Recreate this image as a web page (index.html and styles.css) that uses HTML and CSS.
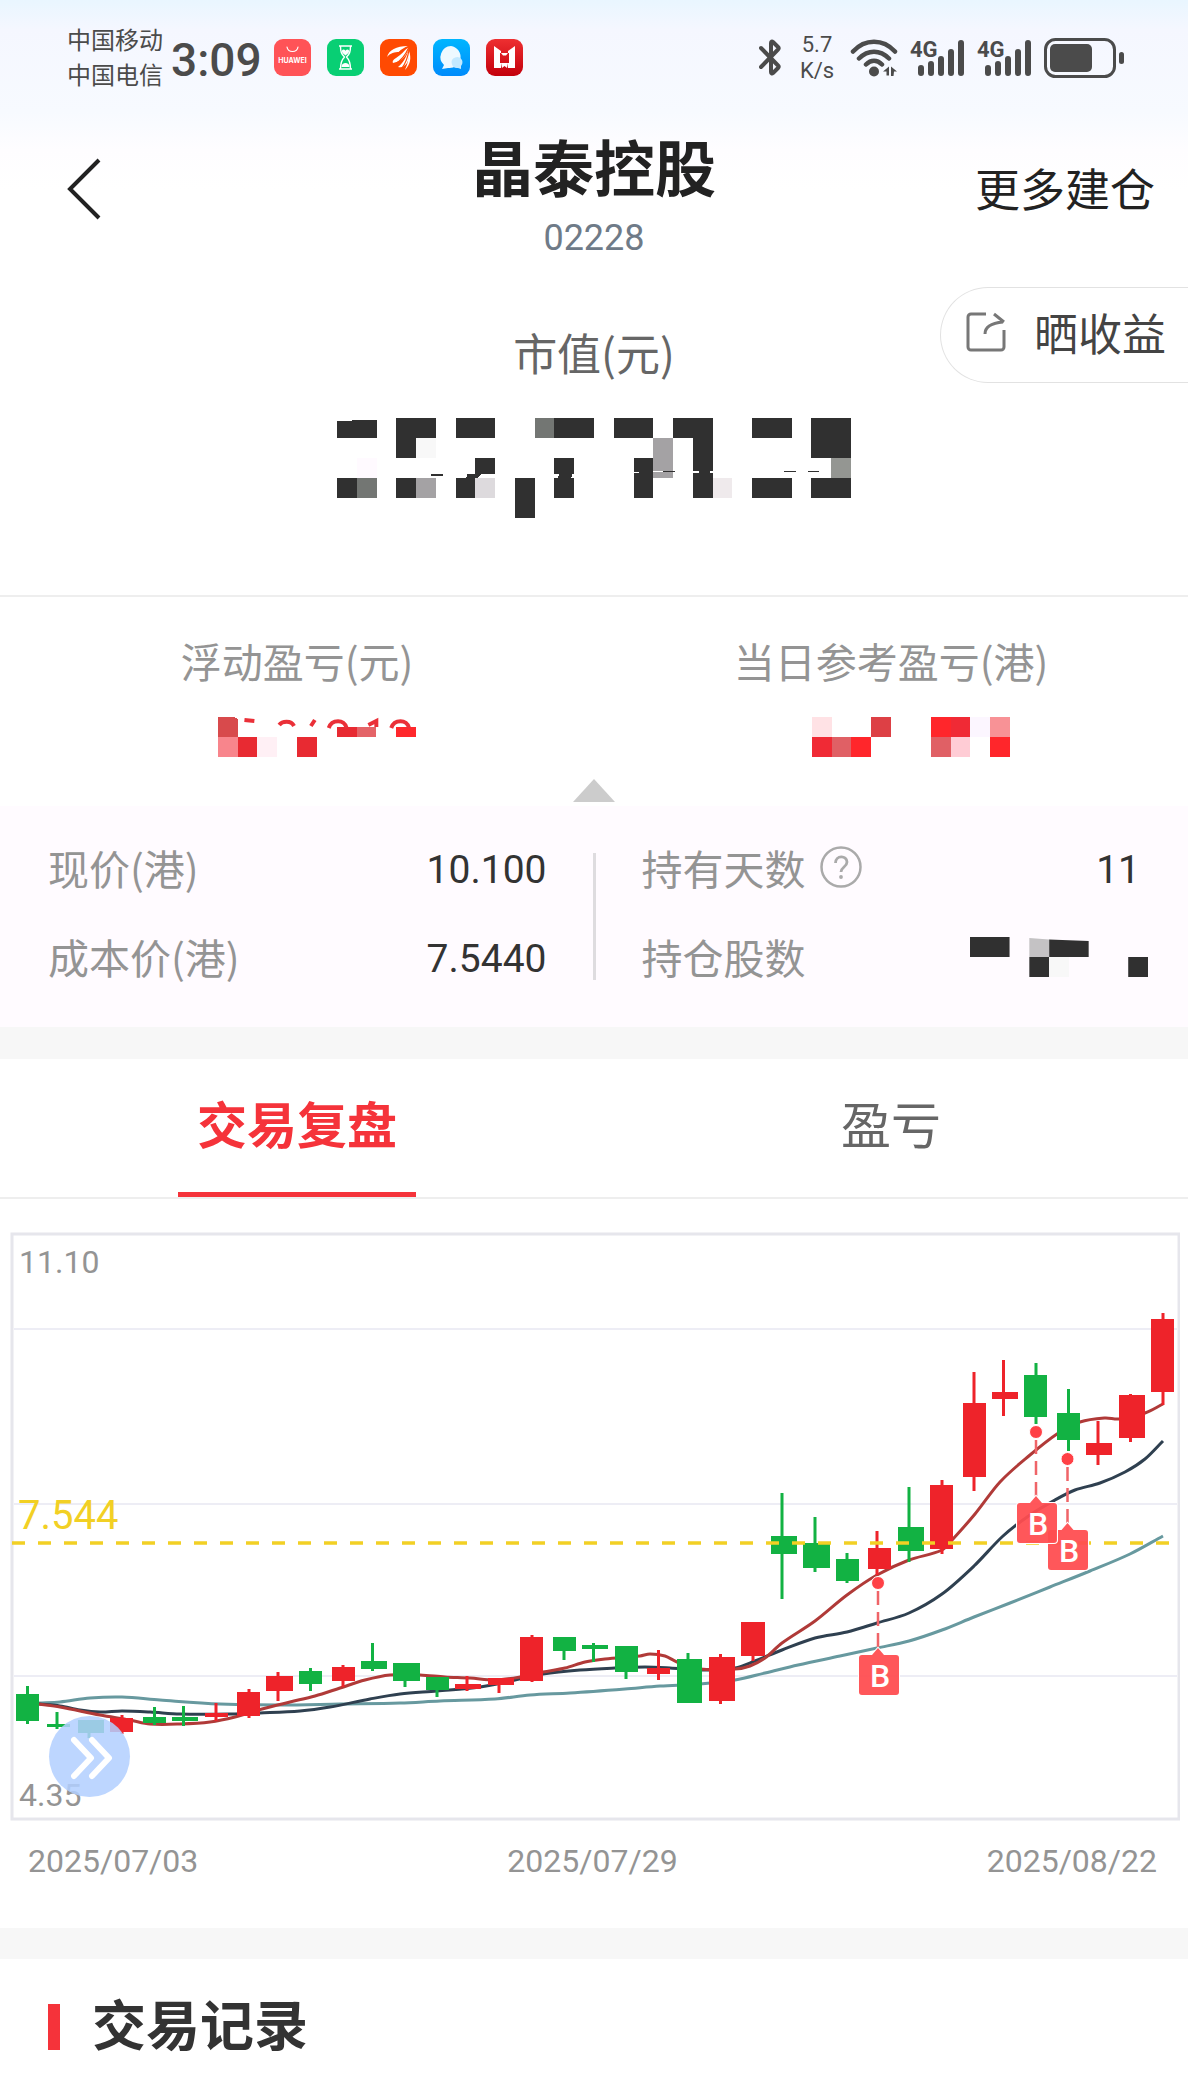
FILE: index.html
```html
<!DOCTYPE html>
<html lang="zh-CN">
<head>
<meta charset="utf-8">
<meta name="viewport" content="width=device-width, initial-scale=1">
<title>晶泰控股 02228</title>
<link rel="stylesheet" href="styles.css">
</head>
<body>
<div class="top">
  <div class="status">
    <div class="status-left">
      <div class="carriers"><span>中国移动</span><span>中国电信</span></div>
      <time class="clock">3:09</time>
      <div class="apps">
        <svg viewBox="0 0 37 37"><rect width="37" height="37" rx="9" fill="#ff5357"/><path d="M13 8c1 6 10 6 11 0" fill="none" stroke="#fff" stroke-width="1.2" stroke-linecap="round"/><text class="brand" x="18.5" y="24" text-anchor="middle">HUAWEI</text></svg>
        <svg viewBox="0 0 37 37"><rect width="37" height="37" rx="9" fill="#08cf74"/><g fill="none" stroke="#fff" stroke-width="1.4" stroke-linejoin="round"><path d="M12 7h13M12 30h13M13.500 7c0 6 1 8 4 11-3 3-4 6-4 12M23.500 7c0 6-1 8-4 11 3 3 4 6 4 12"/></g><path d="M15 11.500c1-1.500 2.500-1 3.500.3 1-1.300 2.500-1.800 3.500-.3.500 2-1.500 3.500-3.500 5-2-1.500-4-3-3.500-5zM14.500 28c0-3 2-4 4-4s4 1 4 4z" fill="#fff"/></svg>
        <svg viewBox="0 0 37 37"><rect width="37" height="37" rx="9" fill="#ff4a02"/><g fill="#fff"><path d="M7 18c2-7 9-11 21-11-4 2-7 3-9 6-4 0-9 1-12 5z"/><path d="M13 24c-1-2 1-4 3-5 5-3 8-7 12-11 1 3-1 6-3 9-3 4-7 6-12 7z"/><path d="M18 28c5-4 8-9 10.500-17 1.500 5 .5 9-1.500 13-2 3-5 5-9 4z"/><path d="M25 31c2-5 4-10 4-19 2.500 7 1.500 13-4 19z"/></g><path d="M9 20C14 15 21 13 28 8M15 25C22 21 26 15 28.500 9M22 29c4-5 6-12 7-18" fill="none" stroke="#ff4a02" stroke-width="1.200"/></svg>
        <svg viewBox="0 0 37 37"><defs><linearGradient id="chat" x2="0" y2="1"><stop stop-color="#00b6ff"/><stop offset="1" stop-color="#008bfb"/></linearGradient></defs><rect width="37" height="37" rx="9" fill="url(#chat)"/><path d="M18 7a11 11 0 1 1-3 22l-6 1 2-4A11 11 0 0 1 18 7z" fill="#eef9ff"/><path d="M29 21a6 6 0 0 1-1 6v3l-3-1a5.500 5.500 0 1 1 4-8z" fill="#c3e9ff"/></svg>
        <svg viewBox="0 0 37 37"><defs><linearGradient id="red" x2="0" y2="1"><stop stop-color="#ee2f31"/><stop offset="1" stop-color="#c3000c"/></linearGradient></defs><rect width="37" height="37" rx="9" fill="url(#red)"/><path d="M8 7l7 5v2h-1v10h1v5H8zM29 7l-7 5v2h1v10h-1v5h7zM15 14h7l-2 2.500h-3zM15 24h7l-1 5-2.500-2-2.500 2z" fill="#fff"/></svg>
      </div>
    </div>
    <div class="status-right">
      <svg class="bt" viewBox="0 0 22 37"><path d="M2 9l17 17.500c1 1 1 1.500 0 2.500l-5 5c-1 .8-2 .5-2-1V4c0-1.500 1-1.800 2-1l5 5c1 1 1 1.500 0 2.500L2 28" fill="none" stroke="#4b4b4b" stroke-width="4" stroke-linecap="round" stroke-linejoin="round"/></svg>
      <div class="speed"><span>5.7</span><span>K/s</span></div>
      <svg class="wifi" viewBox="0 0 48 38"><g fill="none" stroke="#4b4b4b" stroke-width="4.500" stroke-linecap="round"><path d="M3 12.500C15-.5 33-.5 45 12.500M9 19.500c9-9 21-9 30 0M16 25.500c5-5 11-5 16 0"/></g><circle cx="24" cy="32.500" r="5" fill="#4b4b4b"/><path d="M33 32.500l6-5v9h-2.500v-4zM41 27.500l6 5h-3l-.5 4.500H41z" fill="#4b4b4b"/></svg>
      <svg class="signal" viewBox="0 -4 55 46"><text x="0" y="18">4G</text><path d="M11 29v5M21 25v9M31 20v14M41 13v21M51 4v30" stroke="#4b4b4b" stroke-width="6" stroke-linecap="round"/></svg>
      <svg class="signal" viewBox="0 -4 55 46"><text x="0" y="18">4G</text><path d="M11 29v5M21 25v9M31 20v14M41 13v21M51 4v30" stroke="#4b4b4b" stroke-width="6" stroke-linecap="round"/></svg>
      <svg class="battery" viewBox="0 0 80 40"><rect x="1.500" y="1.500" width="69" height="37" rx="10" fill="none" stroke="#4b4b4b" stroke-width="3"/><rect x="6" y="6" width="42" height="28" rx="5" fill="#4b4b4b"/><rect x="75" y="14" width="5" height="12" rx="2.500" fill="#4b4b4b"/></svg>
    </div>
  </div>

  <header class="header">
    <button class="back" type="button" aria-label="返回"><svg viewBox="0 0 36 64"><path d="M33 3L4 32l29 29" fill="none" stroke="#222" stroke-width="4"/></svg></button>
    <div class="stock">
      <h1>晶泰控股</h1>
      <p>02228</p>
    </div>
    <a class="more" href="#more">更多建仓</a>
  </header>
</div>

<main>
  <section class="market">
    <div class="market-value">
      <p class="market-label">市值(元)</p>
      <svg class="mosaic-total" viewBox="0 0 26 5" preserveAspectRatio="none" role="img" aria-label="已隐藏" shape-rendering="crispEdges">
        <path fill="#303030" d="M0 .15L.6 .15 1 .08 2 .12V1H0zM3 0h2v1H4v1H3zM6 0h2v1H6zM11 0h2v1h-2zM14 0h2v1h-2zM17 0h2v4h-1V1h-1zM21 0h2v1h-2zM24 0h2v2h-2zM7 2h1v.8H7zM11 2h1v2h-1zM15 2h1v2h-1zM0 3h1v1H0zM3 3h1v1H3zM6 3h1v1H6zM6.600 2.800h.7l-.3.300h-.5zM9 3h1v2H9zM21 3h2v1h-2zM24 3h2v1h-2zM4.750 2.820h.6v.1h-.6zM16.500 2.650h.6v.07h-.6zM22.600 2.650h.6v.07h-.6zM23.800 2.650h.6v.07h-.6z"/>
        <path fill="#737673" d="M10 0h1v1h-1zM1 3h1v1H1z"/>
        <path fill="#a4a2a4" d="M16 1h1v1.650h-1zM16.500 2.720h.5V3h-1v-.28zM4 3h1v1H4z"/>
        <path fill="#949692" d="M25 2h1v1h-1z"/>
        <path fill="#f8f8f8" d="M4 1h1v1H4z"/>
        <path fill="#fffaff" d="M1 2h1v1H1z"/>
        <path fill="#dddadd" d="M7 3h1v1H7z"/>
        <path fill="#efeaec" d="M19 3h1v1h-1z"/>
        <path fill="#fff" d="M11 2.800h.25l-.1.200H11zM11.900 2.800h.1V3h-.15zM15 2.680h.3v.08H15zM18 2.650h.3v.08H18zM18.850 2.650H19v.08h-.15z"/>
      </svg>
    </div>
    <button class="share" type="button">
      <svg viewBox="0 0 40 40"><path d="M20 2H5a3 3 0 0 0-3 3v30a3 3 0 0 0 3 3h30a3 3 0 0 0 3-3V18M19 22c0-7 6-11 18-12M28 2l10 8" fill="none" stroke="#777" stroke-width="3"/></svg>
      <span>晒收益</span>
    </button>
  </section>

  <section class="profit">
    <div class="profit-item">
      <p>浮动盈亏(元)</p>
      <svg viewBox="0 0 240 40" preserveAspectRatio="none" role="img" aria-label="已隐藏">
        <g shape-rendering="crispEdges"><path fill="#d84a4c" d="M40 0h17l3 2v18H40z"/><path fill="#e82a32" d="M160 10h20v10h-20zM60 20h20v20H60zM120 20h20v20h-20z"/><path fill="#e46468" d="M180 10h20v10h-20z"/><path fill="#ff282c" d="M220 10h20v10h-20z"/><path fill="#f8858c" d="M40 20h20v20H40z"/><path fill="#fff0f5" d="M80 20h20v20H80z"/></g>
        <path fill="none" stroke="#ea3038" stroke-width="4" d="M67 3l10 1M102 8c3-4 12-5 15 1M138 3l-4 6M152 11c3-9 16-9 18 0M192 8l8-4v6M215 11c3-9 16-9 18 0"/>
      </svg>
    </div>
    <div class="profit-item">
      <p>当日参考盈亏(港)</p>
      <svg viewBox="0 0 12 2" preserveAspectRatio="none" role="img" aria-label="已隐藏" shape-rendering="crispEdges">
        <path fill="#ffe2e5" d="M2 0h1v1H2z"/><path fill="#dd4045" d="M5 0h1v1H5z"/><path fill="#ff262b" d="M8 0h1v1H8zM4 1h1v1H4zM11 1h1v1h-1z"/><path fill="#f02a35" d="M9 0h1v1H9zM2 1h1v1H2z"/><path fill="#fcf6ff" d="M10 0h1v1h-1z"/><path fill="#f89296" d="M11 0h1v1h-1z"/><path fill="#e06065" d="M3 1h1v1H3zM8 1h1v1H8z"/><path fill="#ffccd5" d="M9 1h1v1H9z"/>
      </svg>
    </div>
  </section>
  <div class="fold"><svg viewBox="0 0 42 23"><path d="M21 0l21 23H0z" fill="#ccc"/></svg></div>

  <section class="details">
    <dl>
      <div><dt>现价(港)</dt><dd>10.100</dd></div>
      <div><dt>成本价(港)</dt><dd>7.5440</dd></div>
    </dl>
    <i class="rule"></i>
    <dl>
      <div><dt>持有天数 <svg class="help" viewBox="0 0 42 42"><circle cx="21" cy="21" r="19.500" fill="none" stroke="#aaa" stroke-width="2.500"/><path d="M15.500 17c0-8 11.500-8 11.500-1 0 5-6 5-6 10" fill="none" stroke="#aaa" stroke-width="2.800"/><circle cx="21" cy="31" r="1.900" fill="#aaa"/></svg></dt><dd>11</dd></div>
      <div><dt>持仓股数</dt><dd class="hidden-value"><svg viewBox="0 0 9 2" preserveAspectRatio="none" role="img" aria-label="已隐藏"><path fill="#303030" d="M0 0h2v1H0zM4 .12l2 .08V1H4zM3 1h1v1H3zM8 1h1v1H8z"/><path fill="#c4c2c4" d="M3 .05l1 .07V1H3z"/><path fill="#f8f8f8" d="M4 1h1v1H4z"/></svg></dd></div>
    </dl>
  </section>

  <nav class="tabs" aria-label="图表">
    <a class="tab active" href="#review" aria-current="page">交易复盘</a>
    <a class="tab" href="#profit">盈亏</a>
  </nav>

  <section class="chart-section" id="review">
    <div class="chart-box">
      <svg class="chart" id="chart" viewBox="10 33 1170 589" role="img" aria-label="K线图">
        <rect x="12" y="35" width="1167" height="585" fill="none" stroke="#e6e6ec" stroke-width="3"/>
        <path d="M14 130h1163M14 305h1163M14 477h1163" stroke="#e8e8f2" stroke-width="1.500"/>
        <text class="axis" x="19" y="74">11.10</text>
        <text class="axis" x="19" y="607">4.35</text>
        <g id="averages"></g>
        <g id="candles"></g>
        <path d="M12 344h1165" stroke="#f2d024" stroke-width="3.500" stroke-dasharray="13 13"/>
        <text class="cost" x="18" y="330">7.544</text>
        <g id="trades"></g>
      </svg>
      <button class="expand" type="button" aria-label="展开"><svg viewBox="0 0 80 80"><path d="M25 23l17 18-17 18M43 23l17 18-17 18" fill="none" stroke="#fff" stroke-width="6" stroke-linecap="round" stroke-linejoin="round"/></svg></button>
    </div>
    <div class="dates"><time>2025/07/03</time><time>2025/07/29</time><time>2025/08/22</time></div>
  </section>

  <section class="records">
    <h2>交易记录</h2>
  </section>
</main>
<script src="chart.js"></script>
</body>
</html>
```
FILE: styles.css
```css
* { box-sizing: border-box; }
body, h1, h2, p, dl, dd { margin: 0; }
body {
  background: #fff;
  color: #333;
  font-family: "Noto Sans CJK SC", sans-serif;
}
svg { display: block; }
button { padding: 0; border: 0; background: none; font: inherit; color: inherit; }
a { color: inherit; text-decoration: none; }

.top { background: linear-gradient(#e9f6ff 0, #f5f7ff 30px, #f7faff 112px, #fefdff 150px, #fff 190px); }

/* Status bar */
.status {
  display: flex;
  justify-content: space-between;
  align-items: center;
  height: 115px;
  padding: 0 64px 0 67px;
  color: #4b4b4b;
}
.status-left, .status-right { display: flex; align-items: center; }
.carriers { display: flex; flex-direction: column; padding-bottom: 4px; font-size: 24px; line-height: 35px; }
.clock { margin: 4px 12px 0 8px; font: 500 46px/56px Roboto, sans-serif; }
.apps { display: flex; gap: 16px; }
.apps svg { width: 37px; height: 37px; }
.brand { font: 700 7px Inter, sans-serif; fill: #fff; }
.bt { width: 22px; height: 37px; margin-right: 17px; }
.speed {
  display: flex;
  flex-direction: column;
  align-items: center;
  width: 38px;
  margin-right: 14px;
  font: 22px/26px Roboto, sans-serif;
}
.wifi { width: 48px; height: 38px; margin-right: 12px; }
.signal { width: 55px; height: 46px; margin-right: 12px; }
.signal text { font: 700 22px Roboto, sans-serif; fill: #4b4b4b; }
.battery { width: 80px; height: 40px; }

/* Title bar */
.header {
  display: grid;
  grid-template-columns: 1fr auto 1fr;
  align-items: center;
  padding: 0 33px 5px 66px;
}
.back { justify-self: start; }
.back svg { width: 36px; height: 64px; }
.stock { padding: 15px 33px 0 0; text-align: center; }
.stock h1 { font-size: 61px; line-height: 72px; font-weight: 700; color: #222; }
.stock p { margin-top: 12px; font: 36px/48px Roboto, sans-serif; color: #6f7b88; }
.more { justify-self: end; padding-bottom: 2px; font-size: 45px; line-height: 60px; color: #222; }

/* Market value */
.market {
  display: grid;
  grid-template-columns: 1fr auto 1fr;
  align-items: start;
  padding: 20px 0 77px;
  border-bottom: 2px solid #eee;
}
.market-value {
  grid-column: 2;
  display: flex;
  flex-direction: column;
  align-items: center;
  gap: 36px;
  padding-top: 35px;
}
.market-label { font-size: 44px; line-height: 60px; color: #666; }
.mosaic-total { width: 514px; height: 100px; }
.share {
  justify-self: end;
  display: flex;
  align-items: center;
  gap: 28px;
  height: 96px;
  padding: 0 22px 6px 25px;
  border: 1px solid #e2e2e2;
  border-right: 0;
  border-radius: 48px 0 0 48px;
  background: #fff;
  font-size: 44px;
  color: #444;
}
.share svg { width: 40px; height: 40px; }

/* Profit and loss */
.profit { display: grid; grid-template-columns: 1fr 1fr; padding-top: 35px; }
.profit-item { display: flex; flex-direction: column; align-items: center; gap: 29px; }
.profit-item p { font-size: 41px; line-height: 56px; color: #949494; }
.profit-item svg { width: 238px; height: 40px; }
.fold { display: flex; justify-content: center; padding: 22px 0 4px; }
.fold svg { width: 42px; height: 23px; }

/* Position details */
.details {
  display: grid;
  grid-template-columns: 1fr 3px 1fr;
  gap: 46px;
  padding: 34px 48px 38px;
  background: #fffbff;
}
.details dl { display: flex; flex-direction: column; gap: 29px; }
.details dl > div { display: flex; justify-content: space-between; align-items: center; }
.details dt { display: flex; align-items: center; gap: 14px; padding-bottom: 6px; font-size: 41px; line-height: 54px; color: #949494; }
.details dd { font: 39px/60px Roboto, sans-serif; color: #333; }
.rule { margin: 13px 0 9px; background: #dedcdf; }
.help { width: 42px; height: 42px; }
.details .hidden-value { margin-right: -8px; padding-bottom: 4px; }
.hidden-value svg { width: 178px; height: 40px; }

/* Tabs */
.tabs {
  display: grid;
  grid-template-columns: 1fr 1fr;
  justify-items: center;
  border-top: 32px solid #f7f7f7;
  border-bottom: 2px solid #eee;
}
.tab {
  width: 238px;
  padding: 26px 0 32px;
  border-bottom: 5px solid transparent;
  font-size: 50px;
  line-height: 75px;
  text-align: center;
  color: #666;
}
.tab.active { border-color: #f5333a; color: #f5333a; font-weight: 700; }

/* Chart */
.chart-section { padding: 33px 8px 47px 10px; }
.chart-box { position: relative; }
.chart { width: 100%; height: auto; font-family: Roboto, sans-serif; }
.axis { font-size: 32px; fill: #949494; }
.cost { font-size: 40px; fill: #f2d024; }
.mark { font: 500 32px Roboto, sans-serif; fill: #fff; }
.expand {
  position: absolute;
  left: 39px;
  bottom: 24px;
  width: 81px;
  height: 81px;
  border-radius: 50%;
  background: rgba(178, 207, 255, .86);
}
.expand svg { width: 80px; height: 80px; }
.dates {
  display: flex;
  justify-content: space-between;
  padding: 20px 23px 0 18px;
  font: 32px/40px Roboto, sans-serif;
  color: #949494;
}

/* Trade records */
.records { padding: 28px 48px 23px; border-top: 31px solid #f7f7f7; }
.records h2 {
  display: flex;
  align-items: center;
  gap: 32px;
  font-size: 54px;
  line-height: 72px;
  font-weight: 700;
}
.records h2::before { content: ""; width: 12px; height: 46px; margin-top: 8px; background: #f5333a; }
```
FILE: chart.js
```js
// Candle: [side, centre x, high, low, body left, body right, body top, body bottom]
const candles = [
  ["g", 27.5, 487, 525, 16, 39, 495, 522], ["g", 57, 513, 530, 47, 70, 525, 528],
  ["g", 89, 521, 539, 78, 104, 521, 534], ["r", 122, 516, 535, 110, 133, 519, 533],
  ["g", 154.5, 508, 526, 143, 166, 518, 524], ["g", 183.5, 507, 527, 172, 198, 518, 522],
  ["r", 216, 504, 522, 205, 228, 514, 518], ["r", 249, 490, 519, 237, 260, 493, 517],
  ["r", 278, 473, 502, 266, 293, 477, 492], ["g", 310.5, 469, 492, 299, 322, 472, 485],
  ["r", 343, 466, 488, 332, 355, 468, 482], ["g", 372.5, 444, 472, 361, 387, 462, 470],
  ["g", 405, 464, 488, 393, 420, 464, 482], ["g", 437, 478, 498, 426, 449, 478, 491],
  ["r", 467, 477, 492, 455, 481, 485, 490], ["r", 499, 479, 494, 488, 514, 479, 486],
  ["r", 532, 436, 483, 520, 543, 438, 482], ["g", 564, 438, 461, 553, 576, 438, 452],
  ["g", 593.5, 444, 463, 582, 608, 446, 450], ["g", 626, 447, 480, 615, 638, 447, 473],
  ["r", 658.5, 451, 481, 647, 670, 469, 475], ["g", 688, 454, 504, 677, 702, 460, 504],
  ["r", 720.5, 455, 505, 709, 735, 458, 502], ["r", 753, 423, 462, 741, 765, 423, 457],
  ["g", 782, 294, 400, 771, 797, 337, 355], ["g", 815, 318, 373, 803, 830, 344, 369],
  ["g", 847, 354, 384, 836, 859, 360, 382], ["r", 877, 332, 376, 868, 891, 349, 370],
  ["g", 909, 288, 363, 898, 924, 328, 352], ["r", 942, 281, 355, 930, 953, 286, 350],
  ["r", 974, 173, 292, 963, 986, 204, 278], ["r", 1003.5, 161, 217, 992, 1018, 193, 200],
  ["g", 1036, 164, 225, 1024, 1047, 176, 218], ["g", 1068.5, 190, 252, 1057, 1080, 214, 241],
  ["r", 1098, 222, 266, 1086, 1112, 244, 256], ["r", 1130.5, 195, 243, 1119, 1145, 196, 239],
  ["r", 1163, 114, 206, 1151, 1174, 120, 193]
];
const colours = { g: "#12b243", r: "#ee232a" };

// Moving averages: [colour, x, y pairs]
const averages = [
  ["#67999f", [39,504,60,503,90,499,122,498,160,501,220,505,280,506,340,505,400,504,440,502,495,500,530,496,570,494,625,490,660,487,700,485,735,481,765,474,798,466,840,457,877,449,909,442,942,431,974,418,1010,404,1050,388,1090,372,1130,355,1163,337]],
  ["#2f4050", [39,505,60,507,80,511,100,513,122,512,150,513,180,515,230,515,260,514,300,512,330,508,370,500,400,495,437,492,480,488,515,481,543,475,580,471,615,469,645,468,670,469,700,471,735,469,755,462,782,451,815,439,847,433,877,424,909,414,942,395,974,367,1003,337,1030,316,1055,301,1075,291,1100,284,1125,273,1145,260,1163,242]],
  ["#b03a38", [39,505,60,508,100,516,130,521,150,525,180,525,210,523,235,518,262,510,290,503,315,497,340,489,365,481,390,476,420,476,445,478,470,479,495,481,520,478,543,473,565,469,585,463,605,460,640,457,650,455,665,457,677,463,700,470,735,470,750,467,765,459,782,444,815,422,847,396,877,376,909,361,942,351,953,340,975,315,1000,283,1030,256,1057,235,1080,223,1105,219,1119,220,1145,214,1163,205]]
];

// Buy mark: [x, dot y, box left, box top]
const trades = [[878, 384, 859, 456], [1067.5, 260, 1048, 331], [1036, 233, 1017, 304]];

function smooth(v) {
  const p = [];
  for (let i = 0; i < v.length; i += 2) p.push([v[i], v[i + 1]]);
  let d = `M${p[0]}`;
  for (let i = 0; i < p.length - 1; i++) {
    const a = p[i - 1] || p[i], b = p[i], c = p[i + 1], e = p[i + 2] || c;
    const w = (c[0] - b[0]) / 3;
    const s1 = (c[1] - a[1]) / (c[0] - a[0]), s2 = (e[1] - b[1]) / (e[0] - b[0]);
    d += `C${b[0] + w} ${b[1] + w * s1} ${c[0] - w} ${c[1] - w * s2} ${c}`;
  }
  return d;
}

document.getElementById("averages").innerHTML = averages.map(([c, v]) =>
  `<path d="${smooth(v)}" fill="none" stroke="${c}" stroke-width="3"/>`).join("");

document.getElementById("candles").innerHTML = candles.map(([s, x, hi, lo, l, r, t, b]) =>
  `<path d="M${x - 1.5} ${hi}h3V${lo}h-3zM${l} ${t}H${r}V${b}H${l}z" fill="${colours[s]}"/>`).join("");

document.getElementById("trades").innerHTML = trades.map(([x, y, l, t]) =>
  `<path d="M${x} ${y + 8}V${t - 5}" stroke="#ef6468" stroke-width="2.5" stroke-dasharray="14 7"/>
   <circle cx="${x}" cy="${y}" r="6.5" fill="#ff4146" stroke="#fff" stroke-width="1"/>
   <path d="M${l + 3} ${t}H${x - 6}L${x} ${t - 7}L${x + 6} ${t}H${l + 37}q3 0 3 3v34q0 3-3 3H${l + 3}q-3 0-3-3v-34q0-3 3-3z" fill="#ff4d50" fill-opacity=".94" stroke="#fff" stroke-width="2" paint-order="stroke"/>
   <text class="mark" x="${l + 21}" y="${t + 32}" text-anchor="middle">B</text>`).join("");
```
